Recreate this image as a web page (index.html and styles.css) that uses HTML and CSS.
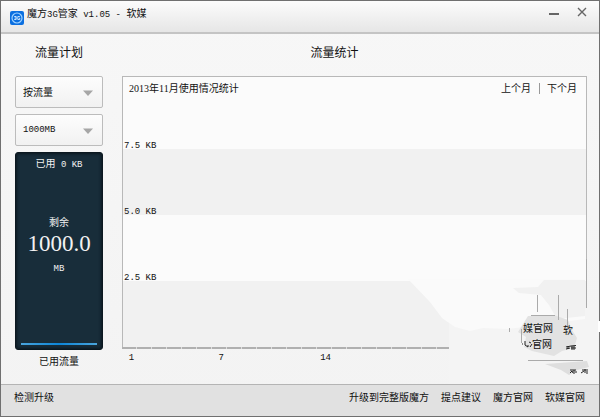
FILE: index.html
```html
<!DOCTYPE html>
<html lang="zh-CN">
<head>
    <meta charset="UTF-8">
    <meta name="viewport" content="width=device-width, initial-scale=1.0">
    <title>魔方3G管家</title>
    <link rel="stylesheet" href="styles.css">
</head>
<body>
    <div class="window">
        <header class="titlebar">
            <svg class="logo" width="14" height="14" viewBox="0 0 14 14" aria-hidden="true">
                <rect width="14" height="14" rx="2" fill="#0b6fe0"/>
                <circle cx="7" cy="7" r="5" fill="none" stroke="#9fd2ff" stroke-width="1.2"/>
                <path d="M4.2 5.5h2v3h-2M4.6 7h1.6M9.8 5.5h-2v3h2V7.2h-.8" fill="none" stroke="#d8edff" stroke-width=".9"/>
            </svg>
            <h1 class="title">魔方<span class="latin">3G</span>管家<span class="latin"> v1.05 - </span>软媒</h1>
            <button class="win-button" type="button" aria-label="最小化">
                <svg width="10" height="10" viewBox="0 0 10 10"><path d="M0 7h10" stroke="#666" stroke-width="2"/></svg>
            </button>
            <button class="win-button" type="button" aria-label="关闭">
                <svg width="10" height="10" viewBox="0 0 10 10"><path d="M1 1l8 8M9 1l-8 8" stroke="#666" stroke-width="1.4"/></svg>
            </button>
        </header>

        <main class="content">
            <section class="plan">
                <h2 class="heading">流量计划</h2>
                <div class="select-box">
                    <select aria-label="计划类型"><option>按流量</option><option>按时间</option></select>
                    <svg class="arrow" width="10" height="6" viewBox="0 0 10 6"><path d="M0 .5h10L5 6z" fill="#a6a6a6"/></svg>
                </div>
                <div class="select-box">
                    <select class="latin" aria-label="流量上限"><option>1000MB</option><option>500MB</option></select>
                    <svg class="arrow" width="10" height="6" viewBox="0 0 10 6"><path d="M0 .5h10L5 6z" fill="#a6a6a6"/></svg>
                </div>
                <div class="gauge">
                    <p class="used">已用<span class="latin"> 0 KB</span></p>
                    <p>剩余</p>
                    <p class="amount">1000.0</p>
                    <p class="latin">MB</p>
                    <div class="level"></div>
                </div>
                <p class="caption">已用流量</p>
            </section>

            <section class="stats">
                <h2 class="heading">流量统计</h2>
                <div class="chart">
                    <div class="band first">
                        <div class="chart-head">
                            <span>2013年11月使用情况统计</span>
                            <nav class="months"><a href="#">上个月</a><a href="#">下个月</a></nav>
                        </div>
                        <span class="latin">7.5 KB</span>
                    </div>
                    <div class="band shaded"><span class="latin">5.0 KB</span></div>
                    <div class="band"><span class="latin">2.5 KB</span></div>
                    <div class="band shaded"></div>
                </div>
                <div class="axis"></div>
                <div class="days latin">
                    <span class="day-1">1</span><span class="day-7">7</span><span class="day-14">14</span>
                </div>
            </section>

            <!-- smudged corner over the chart -->
            <svg class="smudge" width="200" height="125" viewBox="0 0 200 125">
                <path d="M49 87V60h134V49h15v76H49z" fill="#f4f4f4"/>
                <path d="M8 20h177v40l-77 10-25-1-13 3-15-4L42 59 30 43z" fill="#fafafa"/>
                <path d="M144 21h41v36l-28 3-8-14-8-10-22-2-6-5 25-1z" fill="#f1f1f1"/>
                <path d="M128 57l26-1 14 5 4 10 5 8-3 10-12 3-8 5-22-5-8-4 2-10-8-5z" fill="#e2e2e2"/>
                <path d="M145 105l42-3 2 6-12 3-8 5-8-5z" fill="#dedede"/>
                <path d="M198 62h2v11h-2z" fill="#fff"/>
                <path d="M186.500 0v49M137.500 36v17M158.500 36v25M167.500 50v20M109.500 69v4M121.500 70v14M131 56.500h24M128 101.500h55" stroke="#aaa" fill="none"/>
                <g class="smudge-text">
                    <text x="123" y="73">媒官网</text>
                    <text x="163" y="75">软</text>
                    <text x="132" y="89">官网</text>
                </g>
                <path d="M122 85h1M125 82v4l3 2v-2M129 83l2 1M130 88l2-3M166 88l5-1 5-.5M166 90l4-1M168 87v3M172 87v4M174 87v4M171 89h5M170 111h6M170 114l2-2 1 2M174 111v4M176 112v2M182 111h6M181 114l3-2M185 110v4M187 112v3" stroke="#222" fill="none"/>
            </svg>
        </main>

        <footer class="statusbar">
            <a class="update" href="#">检测升级</a>
            <a href="#">升级到完整版魔方</a>
            <a href="#">提点建议</a>
            <a href="#">魔方官网</a>
            <a href="#">软媒官网</a>
        </footer>
    </div>
</body>
</html>
```
FILE: styles.css
```css
* {
    box-sizing: border-box;
}
body {
    margin: 0;
    font-family: "Liberation Serif", "Noto Sans CJK SC", serif;
    font-size: 10px;
    line-height: 14px;
    color: #111;
}
h1, h2, p {
    margin: 0;
    font-weight: normal;
}
a {
    color: inherit;
    text-decoration: none;
}
.latin {
    font-family: "Liberation Mono", monospace;
    font-size: 9px;
    white-space: pre;
}
.window {
    display: flex;
    flex-direction: column;
    min-height: 100vh;
    border: 1px solid #707070;
    background: linear-gradient(#f7f7f7, #f3f3f3);
}

/* title bar */
.titlebar {
    display: flex;
    align-items: flex-start;
    height: 33px;
    padding: 6px 12px 0 9px;
    background: linear-gradient(#fcfcfc, #e6e6e6);
    border-bottom: 2px solid #c4c4c4;
}
.logo {
    margin-top: 4px;
}
.title {
    flex: 1;
    margin-left: 3px;
    font-size: 10px;
}
.win-button {
    display: flex;
    margin-left: 18px;
    padding: 0;
    border: none;
    background: none;
    cursor: pointer;
}

/* content */
.content {
    position: relative;
    flex: 1;
    display: grid;
    grid-template-columns: 88px 1fr;
    column-gap: 19px;
    padding: 0 12px 0 14px;
}
.heading {
    height: 42px;
    padding-top: 12px;
    font-size: 12px;
    text-align: center;
}
.select-box {
    position: relative;
    margin-bottom: 6px;
}
.select-box select {
    display: block;
    width: 100%;
    height: 32px;
    padding: 0 20px 0 7px;
    appearance: none;
    border: 1px solid #bcbcbc;
    border-radius: 2px;
    background: linear-gradient(#fdfdfd, #f1f1f1);
    color: #111;
    font-family: "Liberation Serif", "Noto Sans CJK SC", serif;
    font-size: 10px;
}
.select-box .latin {
    font-family: "Liberation Mono", monospace;
    font-size: 9px;
}
.arrow {
    position: absolute;
    right: 10px;
    top: 14px;
    pointer-events: none;
}
.gauge {
    display: flex;
    flex-direction: column;
    height: 198px;
    padding: 4px 5px;
    border: 1px solid #0c1820;
    border-radius: 3px;
    background: #182d3a;
    box-shadow: inset 0 0 3px 1px #0c1820;
    color: #f2f2f2;
    text-align: center;
}
.used {
    margin-bottom: 44px;
}
.amount {
    margin-bottom: 4px;
    font-size: 23px;
    line-height: 28px;
}
.level {
    height: 2px;
    margin-top: auto;
    background: linear-gradient(90deg, #4aa5dd, #0c86d8, #4aa5dd);
}
.caption {
    padding-top: 5px;
    text-align: center;
}

/* chart */
.stats .heading {
    padding-right: 40px;
}
.chart {
    border: 1px solid #b8b8b8;
    border-bottom: none;
    background: #fbfbfb;
}
.band {
    display: flex;
    flex-direction: column;
    justify-content: flex-end;
    height: 66px;
    padding-left: 1px;
    line-height: 6px;
}
.band.first {
    justify-content: space-between;
    height: 72px;
}
.shaded {
    background: #f1f1f1;
}
.chart-head {
    display: flex;
    justify-content: space-between;
    padding: 5px 9px 0 5px;
    line-height: 14px;
}
.months a + a {
    margin-left: 8px;
    padding-left: 7px;
    border-left: 1px solid #999;
}
.axis {
    height: 2px;
    background: repeating-linear-gradient(90deg, #b0b0b0 0 14px, #ddd 14px 15px);
}
.days {
    display: grid;
    grid-template-columns: repeat(31, 1fr);
    padding: 2px 0 0 2px;
    line-height: 14px;
}
.days span {
    display: flex;
    justify-content: center;
}
.day-1 {
    grid-column: 1;
}
.day-7 {
    grid-column: 7;
}
.day-14 {
    grid-column: 14;
}
.smudge {
    position: absolute;
    right: -1px;
    bottom: 0;
    pointer-events: none;
}
.smudge-text {
    font-size: 10px;
    fill: #111;
}

/* status bar */
.statusbar {
    display: flex;
    gap: 12px;
    height: 32px;
    padding: 6px 14px 0 13px;
    border-top: 1px solid #b4b4b4;
    background: #e1e1e1;
}
.update {
    margin-right: auto;
}
```
